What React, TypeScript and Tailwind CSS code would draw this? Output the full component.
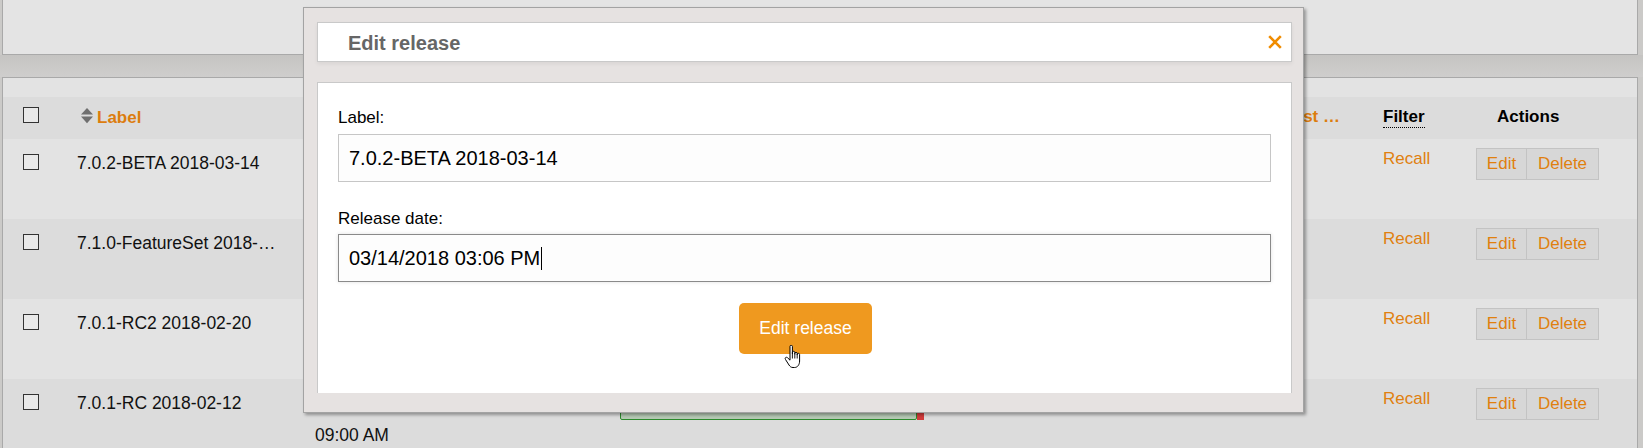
import React from 'react';

const rows = [
  { label: '7.0.2-BETA 2018-03-14', time: '', bg: 'bg-[#e3e3e3]' },
  { label: '7.1.0-FeatureSet 2018-03-01', time: '', bg: 'bg-[#dcdcdc]' },
  { label: '7.0.1-RC2 2018-02-20', time: '', bg: 'bg-[#e3e3e3]' },
  { label: '7.0.1-RC 2018-02-12', time: '09:00 AM', bg: 'bg-[#dcdcdc]' },
];

const Checkbox = () => (
  <div className="w-[16px] h-[16px] border border-[#333] bg-[#e9e9e9]" />
);

const SortIcon = () => (
  <svg width="12" height="16" viewBox="0 0 12 16" className="shrink-0">
    <path d="M6 0 L12 6.6 H0 Z" fill="#6f6f6f" />
    <path d="M0 8.6 H12 L6 15.2 Z" fill="#6f6f6f" />
  </svg>
);

const HandCursor = () => (
  <svg width="17" height="24" viewBox="0 0 17 24">
    <path
      d="M6 1.4c0-.7.5-1.2 1.2-1.2s1.2.5 1.2 1.2V9V7.5c0-.7.5-1.2 1.2-1.2s1.2.5 1.2 1.2V9.5V8.5c0-.7.5-1.2 1.2-1.2s1.2.5 1.2 1.2V10V9.5c0-.7.5-1.2 1.2-1.2s1.2.5 1.2 1.2V16c0 3.5-2 6.5-5 6.5H9c-2 0-3-1-4-2.5L1.5 14.5c-.6-.9-.3-1.8.4-2.1.7-.3 1.4 0 1.9.6L6 15.2Z"
      fill="#fff"
      stroke="#000"
      strokeWidth="1"
      strokeLinejoin="round"
    />
    <path d="M8.4 9v4.5M10.8 9.5v4M13.2 10v3.5" stroke="#000" strokeWidth="0.9" />
  </svg>
);

const EditReleaseModal = () => (
  <div className="absolute left-[303px] top-[7px] w-[1001px] h-[406px] bg-[#e6e2e1] border border-[#a3a3a3] shadow-[2px_2px_3px_rgba(0,0,0,0.35)]">
    <div className="ml-[13px] mt-[14px] w-[975px] h-[40px] bg-white border border-[#c9c9c9] shadow-[0_2px_4px_rgba(0,0,0,0.06)] flex items-center justify-between pl-[30px] pr-[9px]">
      <span className="text-[20px] leading-[24px] font-bold text-[#666] pt-[2px]">Edit release</span>
      <svg width="14" height="14" viewBox="0 0 14 14">
        <path d="M1.2 1.2 L12.8 12.8 M12.8 1.2 L1.2 12.8" stroke="#f08c00" strokeWidth="2.6" />
      </svg>
    </div>
    <div className="ml-[13px] mt-[20px] w-[975px] h-[311px] bg-white border border-b-0 border-[#c9c9c9] pl-[20px] pt-[25px]">
      <div className="text-[17px] leading-[20px] text-black">Label:</div>
      <div className="mt-[6px] w-[933px] h-[48px] border border-[#c6c6c6] bg-[#fdfdfd] flex items-center pl-[10px] text-[20px] text-black">
        7.0.2-BETA 2018-03-14
      </div>
      <div className="mt-[27px] text-[17px] leading-[20px] text-black">Release date:</div>
      <div className="mt-[5px] w-[933px] h-[48px] border border-[#8a8a8a] bg-[#fdfdfd] shadow-[0_0_4px_rgba(0,0,0,0.12)] flex items-center pl-[10px] text-[20px] text-black">
        <span>03/14/2018 03:06 PM</span>
        <span className="inline-block w-[1px] h-[23px] bg-black ml-[1px]" />
      </div>
      <div className="flex justify-center mt-[21px] pr-[18px]">
        <div className="relative w-[133px] h-[51px] rounded-[5px] bg-[#ef991f] text-white text-[17.5px] flex items-center justify-center">
          Edit release
          <div className="absolute left-[45px] top-[42px]">
            <HandCursor />
          </div>
        </div>
      </div>
    </div>
  </div>
);

export default function App() {
  return (
    <div className="relative w-[1643px] h-[448px] overflow-hidden bg-[#cbcac8] font-['Liberation_Sans',Arial,sans-serif]">
      <div className="ml-[2px] w-[1636px] h-[55px] bg-[#e4e4e4] border border-t-0 border-[#a9a9a9]" />
      <div className="h-[22px] bg-gradient-to-b from-[#c5c4c2] to-[#cfcecd]" />
      <div className="ml-[2px] w-[1636px] bg-[#e3e3e3] border border-b-0 border-[#a9a9a9] pt-[19px]">
        <div className="flex h-[42px] bg-[#dcdcdc] text-[17px] leading-[20px] font-bold">
          <div className="w-[74px] pl-[20px] pt-[10px]">
            <Checkbox />
          </div>
          <div className="w-[223px] pl-[4px] pt-[11px] flex items-start gap-[4px] text-[#dc7d0e]">
            <SortIcon />
            <span>Label</span>
          </div>
          <div className="w-[320px]" />
          <div className="w-[304px]" />
          <div className="w-[439px] pt-[10px] pr-[23px] text-right text-[#dc7d0e]">Latest …</div>
          <div className="w-[93px] pl-[20px] pt-[10px] text-black">
            <span className="border-b border-dotted border-black pb-[1px]">Filter</span>
          </div>
          <div className="flex-1 pl-[41px] pt-[10px] text-black">Actions</div>
        </div>
        {rows.map((row) => (
          <div key={row.label} className={`flex h-[80px] ${row.bg} text-[17px] leading-[20px]`}>
            <div className="w-[74px] pl-[20px] pt-[15px]">
              <Checkbox />
            </div>
            <div className="w-[223px] pt-[14px] text-[17.5px] text-[#111]">
              <div className="max-w-[203px] truncate">{row.label}</div>
            </div>
            <div className="w-[320px] pl-[15px] pt-[41px] leading-[30px] text-[17.5px] text-[#111]">
              {row.time}
            </div>
            <div className="w-[304px] pt-[19px]">
              <div className="flex h-[22px]">
                <div className="w-[297px] bg-[#b6c9b4] border border-[#2c8a2c] rounded-b-[2px]" />
                <div className="w-[7px] bg-[#d23b3b]" />
              </div>
            </div>
            <div className="w-[439px]" />
            <div className="w-[93px] pl-[20px] pt-[10px] text-[#e0800f]">Recall</div>
            <div className="flex-1 pl-[20px] pt-[9px]">
              <div className="flex h-[32px] text-[#e0800f]">
                <div className="w-[51px] bg-[#d7d7d7] border border-[#c3c3c3] flex items-center justify-center">Edit</div>
                <div className="w-[72px] bg-[#d7d7d7] border border-l-0 border-[#c3c3c3] flex items-center justify-center">Delete</div>
              </div>
            </div>
          </div>
        ))}
      </div>
      <EditReleaseModal />
    </div>
  );
}
